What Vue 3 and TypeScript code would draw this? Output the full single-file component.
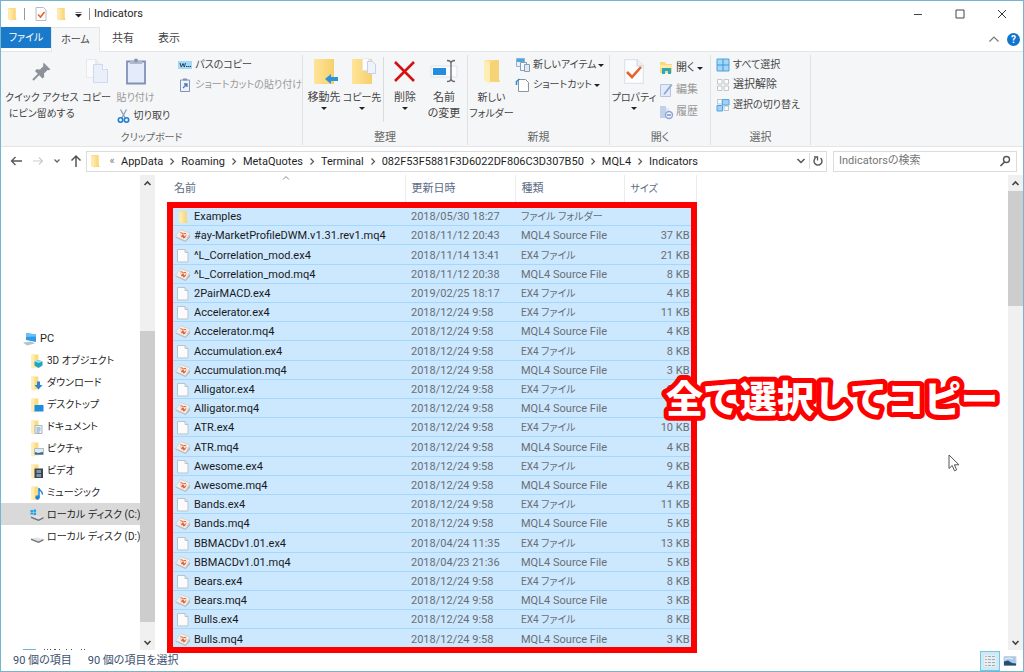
<script setup lang="ts">
import { ref } from 'vue'

interface FileRow {
  name: string
  date: string
  kind: 'folder' | 'mq4' | 'ex4'
  size: string
}

const row = (name: string, date: string, size: string): FileRow => ({
  name,
  date,
  size,
  kind: name.endsWith('.mq4') ? 'mq4' : name.endsWith('.ex4') ? 'ex4' : 'folder',
})

const kindLabel: Record<FileRow['kind'], string> = {
  folder: 'ファイル フォルダー',
  mq4: 'MQL4 Source File',
  ex4: 'EX4 ファイル',
}

const files: FileRow[] = [
  row('Examples', '2018/05/30 18:27', ''),
  row('#ay-MarketProfileDWM.v1.31.rev1.mq4', '2018/11/12 20:43', '37 KB'),
  row('^L_Correlation_mod.ex4', '2018/11/14 13:41', '21 KB'),
  row('^L_Correlation_mod.mq4', '2018/11/12 20:38', '8 KB'),
  row('2PairMACD.ex4', '2019/02/25 18:17', '4 KB'),
  row('Accelerator.ex4', '2018/12/24 9:58', '11 KB'),
  row('Accelerator.mq4', '2018/12/24 9:58', '4 KB'),
  row('Accumulation.ex4', '2018/12/24 9:58', '8 KB'),
  row('Accumulation.mq4', '2018/12/24 9:58', '3 KB'),
  row('Alligator.ex4', '2018/12/24 9:58', '9 KB'),
  row('Alligator.mq4', '2018/12/24 9:58', '4 KB'),
  row('ATR.ex4', '2018/12/24 9:58', '10 KB'),
  row('ATR.mq4', '2018/12/24 9:58', '4 KB'),
  row('Awesome.ex4', '2018/12/24 9:58', '9 KB'),
  row('Awesome.mq4', '2018/12/24 9:58', '4 KB'),
  row('Bands.ex4', '2018/12/24 9:58', '11 KB'),
  row('Bands.mq4', '2018/12/24 9:58', '5 KB'),
  row('BBMACDv1.01.ex4', '2018/04/24 11:35', '13 KB'),
  row('BBMACDv1.01.mq4', '2018/04/23 21:36', '5 KB'),
  row('Bears.ex4', '2018/12/24 9:58', '8 KB'),
  row('Bears.mq4', '2018/12/24 9:58', '3 KB'),
  row('Bulls.ex4', '2018/12/24 9:58', '8 KB'),
  row('Bulls.mq4', '2018/12/24 9:58', '3 KB'),
]

const places = [
  { label: '3D オブジェクト', icon: 'objects' },
  { label: 'ダウンロード', icon: 'download' },
  { label: 'デスクトップ', icon: 'desktop' },
  { label: 'ドキュメント', icon: 'document' },
  { label: 'ピクチャ', icon: 'picture' },
  { label: 'ビデオ', icon: 'video' },
  { label: 'ミュージック', icon: 'music' },
  { label: 'ローカル ディスク (C:)', icon: 'drive-c' },
  { label: 'ローカル ディスク (D:)', icon: 'drive-d' },
]
const current = ref('drive-c')

const crumbs = ['AppData', 'Roaming', 'MetaQuotes', 'Terminal', '082F53F5881F3D6022DF806C3D307B50', 'MQL4', 'Indicators']
const query = ref('')
</script>

<template>
  <div class="window">
    <svg class="defs" aria-hidden="true">
      <defs>
        <linearGradient id="gold" x1="0" y1="0" x2="1" y2="0">
          <stop offset="0" stop-color="#ffe49a" />
          <stop offset="1" stop-color="#f6d06c" />
        </linearGradient>
        <symbol id="folder" viewBox="0 0 16 16">
          <path d="M4 2h7.500v10l1 2H8.500L8 14.500 4 13z" fill="#fbdc83" />
          <path d="M4 2l3.500 1.500V15L4 13z" fill="#ffe9ad" />
          <path d="M7.500 3.500L11.500 2v9l1 3H7.500z" fill="url(#gold)" />
        </symbol>
        <symbol id="ex4" viewBox="0 0 16 16">
          <path d="M2.500 1.500h7.500l3 3v9.500H2.500z" fill="#fbfbfb" stroke="#b9c3cc" />
          <path d="M10 1.500v3h3" fill="none" stroke="#b9c3cc" />
        </symbol>
        <symbol id="mq4" viewBox="0 0 16 16">
          <path d="M5.500 1.500L15 5l-4.500 8L.5 8.500z" fill="#f3eeeb" stroke="#c9c9cc" stroke-width=".7" />
          <path d="M.5 8.500l10 4.500L15 6.500v3l-4.500 4.500L1.500 10z" fill="#b4b8be" />
          <path d="M5 4.500l1.500 3.500L8 6l1.500 2.500L12 6l-2 4-1.500.5L7.500 9l-1 .5z" fill="#e4622e" />
          <path d="M5.500 4.500l3 1.200 2.500-.2" fill="none" stroke="#dd6436" />
        </symbol>
        <symbol id="corner-folder" viewBox="0 0 16 16">
          <path d="M2.500 1.500h7v13h-7z" fill="#fbdc83" />
          <path d="M2.500 1.500l3 1V16l-3-1.500z" fill="#ffedb5" />
        </symbol>
        <symbol id="page" viewBox="0 0 16 20">
          <path d="M.5.5h10l5 5v14H.5z" fill="#fcfdff" stroke="#dfe3ea" />
          <path d="M10.500.5v5h5" fill="#eef1f7" stroke="#d2d8e3" />
        </symbol>
      </defs>
    </svg>

    <header class="title-bar">
      <svg class="i16"><use href="#folder" /></svg>
      <span class="bar" />
      <button class="plain" aria-label="プロパティ">
        <svg class="i16" viewBox="0 0 16 16"><path d="M3 1.500h7.500L13 4v10.500H3z" fill="#fff" stroke="#b8bcc2" /><path d="M5 8.500l2.500 2.500 4-5" fill="none" stroke="#e5622b" stroke-width="1.600" /></svg>
      </button>
      <button class="plain" aria-label="新しいフォルダー"><svg class="i16"><use href="#folder" /></svg></button>
      <button class="plain customize" aria-label="クイック アクセス ツール バーのカスタマイズ">
        <svg viewBox="0 0 12 16"><path d="M2.500 6.500h6" stroke="#777" /><path d="M2 8h7l-3.500 3.500z" fill="#222" /></svg>
      </button>
      <span class="bar dark" />
      <h1>Indicators</h1>
      <div class="controls">
        <button aria-label="最小化"><svg viewBox="0 0 10 10"><path d="M1 5.500h8" stroke="#444" /></svg></button>
        <button aria-label="最大化"><svg viewBox="0 0 10 10"><path d="M1 1h8v8H1z" fill="none" stroke="#444" /></svg></button>
        <button aria-label="閉じる"><svg viewBox="0 0 10 10"><path d="M1 1l8 8M9 1L1 9" stroke="#333" /></svg></button>
      </div>
    </header>

    <nav class="tabs">
      <button class="file">ファイル</button>
      <button class="active">ホーム</button>
      <button>共有</button>
      <button>表示</button>
      <div class="help">
        <button class="plain" aria-label="リボンの最小化"><svg class="i16" viewBox="0 0 16 16"><path d="M3.500 10.500L8 6l4.500 4.500" fill="none" stroke="#777" stroke-width="1.200" /></svg></button>
        <button class="question" aria-label="ヘルプ">?</button>
      </div>
    </nav>

    <section class="ribbon">
      <div class="group clipboard">
        <div class="tools">
          <button class="big pin">
            <svg viewBox="0 0 28 28"><path d="M5 23l7-7" stroke="#8f959b" stroke-width="2" /><path d="M15.500 5.500l7 7-2 .8-1-.3-3.500 3.500.2 3.500-1.700 1.500-7.500-7.500 1.500-1.700 3.500.2 3.500-3.500-.4-1z" fill="#8b9299" /></svg>
            <span class="kana">クイック アクセス<br>にピン留めする</span>
          </button>
          <button class="big copy">
            <svg viewBox="0 0 28 28"><g opacity=".75"><use href="#page" x="3" y="2" width="15" height="19" /></g><path d="M10.500 7.500h9l5 5v13h-14z" fill="#e9f0fc" stroke="#cfd9ee" /><path d="M19.500 7.500v5h5" fill="#fff" stroke="#cfd9ee" /></svg>
            <span class="kana">コピー</span>
          </button>
          <div class="paste-stack">
            <button class="big faded">
              <svg viewBox="0 0 28 28"><path d="M5 4.500h18v22H5z" fill="#e4ebfb" stroke="#8291b8" stroke-width="1.800" /><path d="M8 4h12v3H8z" fill="#aeb9ce" /><circle cx="14" cy="3.500" r="2" fill="#8b98b3" /></svg>
              <span class="kana">貼り付け</span>
            </button>
            <button class="small"><svg viewBox="0 0 16 16"><path d="M4.500 1.500l5 9M10.500 1.500l-5 9" stroke="#8aa0b6" stroke-width="1.300" /><circle cx="4.500" cy="12" r="2.200" fill="none" stroke="#1c7fd0" stroke-width="1.600" /><circle cx="10.500" cy="12" r="2.200" fill="none" stroke="#1c7fd0" stroke-width="1.600" /></svg><span class="kana">切り取り</span></button>
          </div>
          <div class="column">
            <button class="small"><svg viewBox="0 0 16 16"><path d="M1 4h14v8H1z" fill="#a6d8f5" /><path d="M3 6l1.300 4L6 6.500 7.300 10 8.500 6M9 9.500h1.500M11 9.500h1.500M13 9.500h1" fill="none" stroke="#1d4964" /></svg><span class="kana">パスのコピー</span></button>
            <button class="small faded"><svg viewBox="0 0 16 16"><path d="M3.500 3h9v11.500h-9z" fill="#edf3fc" stroke="#8292b4" /><path d="M6 1.500h4v2H6z" fill="#8292b4" /><path d="M6 11l4-4M7 7h3v3" fill="none" stroke="#4c79b8" stroke-width="1.300" /></svg><span class="kana">ショートカットの貼り付け</span></button>
          </div>
        </div>
        <h2 class="kana">クリップボード</h2>
      </div>

      <div class="group organize">
        <div class="tools">
          <button class="big caret">
            <svg viewBox="0 0 28 28"><path d="M4 2h20v25H4z" fill="url(#gold)" /><path d="M15 22l6-5v3h7v4h-7v3z" fill="#2c94dc" /></svg>
            <span>移動先</span>
          </button>
          <button class="big caret">
            <svg viewBox="0 0 28 28"><path d="M4 2h20v25H4z" fill="url(#gold)" /><use href="#page" x="14" y="1" width="10" height="13" /><path d="M19.500 4.500h5l3 3v9h-8z" fill="#edf3fd" stroke="#c5d1e8" /></svg>
            <span class="kana">コピー先</span>
          </button>
          <span class="rule" />
          <button class="big caret">
            <svg viewBox="0 0 28 28"><path d="M4 5l19 19M23 5L4 24" stroke="#d41111" stroke-width="2.600" /></svg>
            <span>削除</span>
          </button>
          <button class="big rename">
            <svg viewBox="0 0 28 28"><path d="M1 9h26v11H1z" fill="#fafcff" stroke="#e0e3e8" /><path d="M3 11h13v7H3z" fill="#258cdf" /><path d="M17 3.500c3 0 4 1 4 3v15c0 2-1 3-4 3M25 3.500c-3 0-4 1-4 3v15c0 2 1 3 4 3" fill="none" stroke="#666" stroke-width="1.300" /></svg>
            <span>名前<br>の変更</span>
          </button>
        </div>
        <h2>整理</h2>
      </div>

      <div class="group create">
        <div class="tools">
          <button class="big">
            <svg viewBox="0 0 28 28"><path d="M6 3h15v19l1 3H12l-6-2z" fill="url(#gold)" /><path d="M6 3l6 2v22l-6-4z" fill="#ffedb3" /><path d="M12 5l9-2v20l-9 2z" fill="#f5d376" /></svg>
            <span class="kana">新しい<br>フォルダー</span>
          </button>
          <div class="column">
            <button class="small menu"><svg viewBox="0 0 16 16"><path d="M1.500 1.500h8v8h-8z" fill="#e3f1fb" stroke="#8db4d2" /><path d="M2 2h7v3H2z" fill="#52a5da" /><path d="M5.500 5.500h6v8h-6z" fill="#f4f8fd" stroke="#8b9db5" /><path d="M9.500 7.500h5v7h-5z" fill="#dfe9f8" stroke="#8b9db5" /></svg><span class="kana">新しいアイテム</span></button>
            <button class="small menu"><svg viewBox="0 0 16 16"><path d="M3.500 2.500h7l3 3v9h-10z" fill="#fff" stroke="#8c949e" /><path d="M1.500 8V4.500l3-2.500" fill="none" stroke="#2c8fd6" stroke-width="1.600" /></svg><span class="kana">ショートカット</span></button>
          </div>
        </div>
        <h2>新規</h2>
      </div>

      <div class="group open">
        <div class="tools">
          <button class="big caret">
            <svg viewBox="0 0 28 28"><use href="#page" x="4" y="2" width="20" height="25" /><path d="M7 15l5 5 9-10" fill="none" stroke="#e6622a" stroke-width="2.600" /></svg>
            <span class="kana">プロパティ</span>
          </button>
          <div class="column loose">
            <button class="small menu"><svg viewBox="0 0 16 16"><path d="M2 2h5l1 2h6v9H2z" fill="#fad978" /><path d="M2 5h12v3H2z" fill="#ffe9a6" /><path d="M4 14V8h9v6h-3v-3H7v3z" fill="#2aa8bd" /></svg>開く</button>
            <button class="small faded"><svg viewBox="0 0 16 16"><path d="M2.500 2.500h10v12h-10z" fill="#e3ebfa" stroke="#b7c4df" /><path d="M6 11l7-9 1.500 1-7 9-2 1z" fill="#8ea7d0" /></svg>編集</button>
            <button class="small faded"><svg viewBox="0 0 16 16"><path d="M2 2h6v12H2z" fill="#c3d0ec" /><path d="M8 4h3v8H8z" fill="#e1e8f6" /><circle cx="11" cy="11" r="3.500" fill="#eef3fc" stroke="#8ea5d4" stroke-width="1.400" /><path d="M9 11h4" stroke="#6f8cc6" stroke-width="1.400" /></svg>履歴</button>
          </div>
        </div>
        <h2>開く</h2>
      </div>

      <div class="group select">
        <div class="tools">
          <div class="column">
            <button class="small"><svg viewBox="0 0 16 16"><path d="M2 2h12v12H2z" fill="#a5d5f8" stroke="#4da3e0" /><path d="M8 2v12M2 8h12" stroke="#3d97da" /></svg><span class="kana">すべて選択</span></button>
            <button class="small"><svg viewBox="0 0 16 16"><path d="M2.500 2.500h4.500v4.500H2.500zM9 2.500h4.500v4.500H9zM2.500 9h4.500v4.500H2.500zM9 9h4.500v4.500H9z" fill="#fbfbfb" stroke="#c2c5c9" /></svg>選択解除</button>
            <button class="small"><svg viewBox="0 0 16 16"><path d="M2.500 2.500h4.500v4.500H2.500zM9 9h4.500v4.500H9z" fill="#fbfbfb" stroke="#b9c3cd" /><path d="M7.500 2.500h6.500v5.500H7.500zM2 8.500h5.500v5.500H2z" fill="#9ed1f7" stroke="#55a6e0" /></svg><span class="kana">選択の切り替え</span></button>
          </div>
        </div>
        <h2>選択</h2>
      </div>
    </section>

    <div class="address-row">
      <div class="history">
        <button class="plain" aria-label="戻る"><svg viewBox="0 0 16 16"><path d="M14 8H4M7.500 4L3.500 8l4 4" fill="none" stroke="#555" stroke-width="1.300" /></svg></button>
        <button class="plain" aria-label="進む"><svg viewBox="0 0 16 16"><path d="M3 8h9M9 4.500L12.500 8 9 11.500" fill="none" stroke="#ccc" stroke-width="1.200" /></svg></button>
        <button class="plain tiny" aria-label="最近表示した場所"><svg viewBox="0 0 10 16"><path d="M2.500 6.500L5 9l2.500-2.500" fill="none" stroke="#666" stroke-width="1.300" /></svg></button>
        <button class="plain" aria-label="上へ"><svg viewBox="0 0 16 16"><path d="M8 14V3M3.500 7.500L8 3l4.500 4.500" fill="none" stroke="#555" stroke-width="1.500" /></svg></button>
      </div>
      <div class="address">
        <svg class="i16"><use href="#folder" /></svg>
        <span class="more">«</span>
        <template v-for="(c, i) in crumbs" :key="c">
          <svg v-if="i > 0" class="chev" viewBox="0 0 18 16"><path d="M7.500 5.500l3 3-3 3" fill="none" stroke="#555" stroke-width="1.200" /></svg>
          <a href="#">{{ c }}</a>
        </template>
        <button class="plain end" aria-label="以前の場所"><svg viewBox="0 0 16 16"><path d="M4.500 6L8 9.500 11.500 6" fill="none" stroke="#555" stroke-width="1.500" /></svg></button>
        <button class="plain refresh" aria-label="最新の情報に更新"><svg viewBox="0 0 16 16"><path d="M5.500 5A4 4 0 1 0 10.500 5" fill="none" stroke="#555" stroke-width="1.400" /><path d="M4 4h3.500v3.500" fill="none" stroke="#555" stroke-width="1.300" /></svg></button>
      </div>
      <label class="search">
        <input v-model="query" type="text" placeholder="Indicatorsの検索" aria-label="Indicatorsの検索">
        <svg class="i16" viewBox="0 0 16 16"><circle cx="9.500" cy="6.500" r="3" fill="none" stroke="#555" stroke-width="1.400" /><path d="M7.500 9L3.500 13" stroke="#555" stroke-width="1.700" /></svg>
      </label>
    </div>

    <main class="body">
      <aside class="tree">
        <a href="#" class="root"><svg class="i16" viewBox="0 0 16 16"><path d="M4 2l10 1.500v7.500L4 9z" fill="#2f9be4" /><path d="M4 2l10 1.500v2L4 6z" fill="#6cc1f4" /><path d="M1 11.500l8-1 4 2-8 2z" fill="#b7c2cb" /></svg>PC</a>
        <a v-for="p in places" :key="p.icon" href="#" :class="{ current: current === p.icon }" @click.prevent="current = p.icon">
          <svg class="i16" viewBox="0 0 16 16">
            <use v-if="!p.icon.startsWith('drive')" href="#corner-folder" />
            <template v-if="p.icon === 'objects'"><path d="M5.500 8.500L9.500 7l4 1.500v4l-4 2.500-4-2.500z" fill="#20a4c4" /><path d="M5.500 8.500L9.500 7l4 1.500-4 1.500z" fill="#8fe0ef" /></template>
            <path v-else-if="p.icon === 'download'" d="M8 6.500h3V10h2.500l-4 4.500-4-4.500H8z" fill="#2a82d0" />
            <path v-else-if="p.icon === 'desktop'" d="M5.500 8h9v6.500h-9z" fill="#1c8fe2" />
            <template v-else-if="p.icon === 'document'"><path d="M6 6.500h7v8H6z" fill="#f0f5fa" stroke="#a5b5c4" /><path d="M7.500 9h4M7.500 11h4M7.500 13h3" stroke="#6f93b5" /></template>
            <template v-else-if="p.icon === 'picture'"><path d="M5.500 7.500h9v6h-9z" fill="#dcecf8" stroke="#b0bbc6" /><path d="M6 11l3 1 5-1v2.500H6z" fill="#37698f" /></template>
            <template v-else-if="p.icon === 'video'"><path d="M5.500 5.500h8.500v9.500H5.500z" fill="#3e454d" /><path d="M7.500 7h4.500v3H7.500zM7.500 11h4.500v3H7.500z" fill="#7c96ad" /></template>
            <template v-else-if="p.icon === 'music'"><path d="M10 3v9.500M10 3.500c0 2 4 2.500 3.500 6" fill="none" stroke="#1b86d6" stroke-width="1.500" /><circle cx="8.500" cy="12.500" r="2.200" fill="#1b86d6" /></template>
            <template v-else>
              <path d="M2 9.500l6-1 6.500 1.500-5 2.500z" fill="#dfe2e5" /><path d="M2 9.500l7.500 3 5-2.500v1.500l-5 2.500L2 11z" fill="#6d7379" />
              <path v-if="p.icon === 'drive-c'" d="M1.500 3h2.500v2H1.500zM4.500 2.500h2.500V5H4.500zM1.500 5.500h2.500v2H1.500zM4.500 5.500h2.500V8H4.500z" fill="#1fa3e6" />
            </template>
          </svg><span class="kana">{{ p.label }}</span>
        </a>
        <svg class="cut" viewBox="0 0 64 2" aria-hidden="true"><path d="M0 1.500h13" stroke="#6fb4dc" /><path d="M21 1.500h1M24 1.500h1M27 1.500h1M31 1.500h2M36 1.500h1M43 1.500h1M48 1.500h1M58 1.500h1M61 1.500h1" stroke="#555" /></svg>
      </aside>
      <div class="scroll left" aria-hidden="true">
        <svg viewBox="0 0 14 16"><path d="M4 10l3-3 3 3" fill="none" stroke="#444" stroke-width="1.600" /></svg>
        <i class="gap" /><i class="thumb" /><i class="rest" />
        <svg viewBox="0 0 14 16"><path d="M4 7l3 3 3-3" fill="none" stroke="#444" stroke-width="1.600" /></svg>
      </div>

      <div class="files">
        <table>
          <thead>
            <tr>
              <th class="c-name">名前<svg class="sort" viewBox="0 0 10 6"><path d="M2 4.500l3-3 3 3" fill="none" stroke="#888" /></svg></th>
              <th class="c-date">更新日時</th>
              <th class="c-kind">種類</th>
              <th class="c-size kana">サイズ</th>
            </tr>
          </thead>
          <tbody>
            <tr v-for="f in files" :key="f.name">
              <td class="name"><div><svg class="i16"><use :href="'#' + f.kind" /></svg>{{ f.name }}</div></td>
              <td>{{ f.date }}</td>
              <td :class="{ kana: f.kind !== 'mq4' }">{{ kindLabel[f.kind] }}</td>
              <td class="size">{{ f.size }}</td>
            </tr>
          </tbody>
        </table>
        <div class="frame" />
        <svg class="callout" viewBox="0 0 350 60"><text x="8" y="43">全て選択してコピー</text></svg>
        <svg class="pointer" viewBox="0 0 12 18"><path d="M1 1v13.500l3.200-3 2.300 5.300 2.200-1-2.300-5H11z" fill="#fff" stroke="#555" /></svg>
      </div>
      <div class="scroll right" aria-hidden="true">
        <svg viewBox="0 0 14 16"><path d="M4 10l3-3 3 3" fill="none" stroke="#444" stroke-width="1.600" /></svg>
        <i class="thumb" /><i class="rest" />
        <svg viewBox="0 0 14 16"><path d="M4 7l3 3 3-3" fill="none" stroke="#444" stroke-width="1.600" /></svg>
      </div>
    </main>

    <footer class="status">
      <span>90 個の項目</span>
      <span>90 個の項目を選択</span>
      <div class="views">
        <button class="on" aria-label="詳細"><svg viewBox="0 0 16 16"><path d="M2 2h12v12H2z" fill="#e6eef1" /><path d="M3 3.500h2M3 6.500h2M3 9.500h2M3 12.500h2" stroke="#d3aaa4" /><path d="M6 3.500h3M10 3.500h3M6 6.500h3M10 6.500h3M6 9.500h3M10 9.500h3M6 12.500h3M10 12.500h3" stroke="#9dabb4" /></svg></button>
        <button aria-label="大アイコン"><svg viewBox="0 0 16 16"><path d="M2 3.500h12v9H2z" fill="#a8c9ef" stroke="#c9d3dd" /><path d="M2 8.500l4-1 4 2.500 4 .5v2H2z" fill="#22506f" /><path d="M3 6l4-1 4 1" stroke="#eef6ff" fill="none" /></svg></button>
      </div>
    </footer>
  </div>
</template>

<style>
body {
  margin: 0;
}
</style>

<style scoped>
* {
  box-sizing: border-box;
}
.window {
  display: flex;
  flex-direction: column;
  height: 100vh;
  border: 1px solid #74b6cc;
  background: #fff;
  color: #1f1f1f;
  font: 11px/16px Roboto, "Noto Sans CJK JP", sans-serif;
  font-feature-settings: "palt";
  overflow: hidden;
}
.defs {
  position: absolute;
  width: 0;
  height: 0;
}
button {
  margin: 0;
  padding: 0;
  border: 0;
  background: none;
  color: inherit;
  font: inherit;
  font-feature-settings: inherit;
  white-space: nowrap;
}
svg {
  display: block;
  flex: none;
}
.i16 {
  width: 16px;
  height: 16px;
}
a {
  color: inherit;
  text-decoration: none;
  white-space: nowrap;
}
h1, h2 {
  margin: 0;
  font-size: 11px;
  font-weight: 400;
}

.title-bar {
  display: flex;
  align-items: center;
  flex: none;
  height: 26px;
  gap: 4px;
  padding-left: 3px;
}
.bar {
  width: 1px;
  height: 12px;
  margin-right: 4px;
  background: #999;
}
.bar.dark {
  margin: 0;
}
.title-bar h1 {
  font-size: 11px;
}
.customize svg {
  width: 12px;
  height: 16px;
}
.controls {
  display: flex;
  align-self: stretch;
  margin-left: auto;
}
.controls button {
  display: grid;
  place-items: center;
  width: 42px;
}
.controls svg {
  width: 10px;
  height: 10px;
}

.tabs {
  display: flex;
  flex: none;
  height: 24px;
}
.tabs > button {
  width: 46px;
  color: #444;
}
.tabs > .file {
  width: 50px;
  margin-bottom: 3px;
  background: #1979ca;
  color: #fff;
  font-size: 10px;
}
.tabs > .active {
  position: relative;
  width: 49px;
  margin-bottom: -1px;
  border: 1px solid #e3e5e7;
  border-bottom: 0;
  background: #f5f6f7;
  font-size: 10px;
}
.help {
  display: flex;
  align-items: center;
  gap: 5px;
  margin-left: auto;
  padding-right: 3px;
}
.question {
  width: 13px;
  height: 13px;
  border-radius: 50%;
  background: #0f75cf;
  color: #fff;
  font-size: 10px;
  font-weight: 700;
  line-height: 13px;
}

.ribbon {
  display: flex;
  flex: none;
  height: 96px;
  border: 1px solid #e3e5e7;
  border-width: 1px 0;
  background: #f5f6f7;
  color: #444;
}
.group {
  display: flex;
  flex-direction: column;
  justify-content: space-between;
  margin: 3px 0 1px;
  border-right: 1px solid #dfe1e3;
}
.group h2 {
  color: #666;
  text-align: center;
  line-height: 14px;
}
.kana,
.group h2.kana {
  font-size: 10px;
}
.tools {
  display: flex;
}
.clipboard { width: 302px; }
.organize { width: 165px; }
.create { width: 142px; }
.open { width: 101px; }
.select { width: 100px; }
.big {
  display: flex;
  flex-direction: column;
  align-items: center;
  gap: 5px;
  width: 38px;
  padding-top: 2px;
  line-height: 16px;
}
.big svg {
  width: 28px;
  height: 28px;
}
.caret::after,
.menu::after {
  content: "";
  border: 3px solid transparent;
  border-top-color: #222;
  border-bottom: 0;
}
.caret::after {
  margin-top: -4px;
}
.pin {
  width: 82px;
}
.clipboard .copy {
  width: 28px;
}
.clipboard .faded {
  color: #999;
}
.paste-stack {
  width: 67px;
}
.paste-stack .big {
  width: 50px;
}
.paste-stack .small {
  margin-left: 5px;
}
.column {
  display: flex;
  flex-direction: column;
}
.small {
  display: flex;
  align-items: center;
  gap: 2px;
  height: 20px;
  line-height: 18px;
}
.small svg {
  width: 16px;
  height: 16px;
}
.faded {
  color: #999;
}
.loose {
  padding-top: 2px;
}
.loose .small {
  height: 22px;
}
.organize .tools {
  padding-left: 2px;
}
.rule {
  width: 1px;
  margin: 2px 2px 0;
  background: #d9dbdd;
}
.organize .rename {
  width: 40px;
}
.create .big {
  width: 47px;
}
.open .big {
  width: 48px;
}
.select .tools {
  padding-left: 4px;
}

.address-row {
  display: flex;
  flex: none;
  align-items: center;
  height: 28px;
  padding-right: 6px;
}
.history {
  display: flex;
  gap: 6px;
  width: 85px;
  padding-left: 7px;
}
.history svg,
.address button svg {
  width: 16px;
  height: 16px;
}
.history .tiny svg {
  width: 10px;
}
.address {
  display: flex;
  flex: 1;
  align-items: center;
  height: 21px;
  border: 1px solid #dcdcdc;
}
.address a {
  padding-top: 1px;
}
.more {
  width: 18px;
  color: #777;
  text-align: center;
}
.chev {
  width: 18px;
  height: 16px;
}
.end {
  margin-left: auto;
}
.refresh {
  border-left: 1px solid #dcdcdc;
}
.search {
  display: flex;
  align-items: center;
  width: 184px;
  height: 21px;
  margin-left: 6px;
  padding: 0 3px 0 5px;
  border: 1px solid #dcdcdc;
}
.search input {
  flex: 1;
  min-width: 0;
  padding: 0;
  border: 0;
  outline: 0;
  font: inherit;
  font-feature-settings: inherit;
}
.search input::placeholder {
  color: #767676;
}

.body {
  display: flex;
  flex: 1;
  min-height: 0;
}
.tree {
  display: flex;
  flex-direction: column;
  width: 139px;
  padding-top: 152px;
  overflow: hidden;
}
.tree a {
  display: flex;
  flex: none;
  align-items: center;
  gap: 2px;
  height: 22px;
  padding: 2px 0 0 28px;
}
.tree .root {
  padding-left: 21px;
}
.tree .current {
  background: #d9d9d9;
}
.cut {
  width: 64px;
  height: 2px;
  margin: auto 0 0 22px;
}
.scroll {
  display: flex;
  flex-direction: column;
  width: 15px;
  background: #f0f0f0;
}
.scroll svg {
  height: 16px;
  width: 100%;
}
.left .gap {
  flex: 140;
}
.thumb {
  flex: 291;
  background: #cdcdcd;
}
.left .rest {
  flex: 12;
}
.right .thumb {
  flex: 115;
}
.right .rest {
  flex: 328;
}
.files {
  position: relative;
  flex: 1;
  padding: 0 0 1px 18px;
}
table {
  width: 524px;
  height: 100%;
  border-collapse: collapse;
  table-layout: fixed;
}
th {
  height: 32px;
  padding: 0 0 5px 6px;
  border-right: 1px solid #ececec;
  color: #5b6b84;
  font-weight: 400;
  text-align: left;
}
.c-name { width: 232px; padding-left: 1px; position: relative; }
.c-date { width: 110px; }
.c-kind { width: 109px; }
.sort {
  position: absolute;
  top: 0;
  left: 108px;
  width: 10px;
  height: 6px;
}
td {
  padding: 2px 0 0 6px;
  border-bottom: 1px solid #a5d6fb;
  background: #cce8ff;
  color: #6a6e73;
  line-height: 16px;
  white-space: nowrap;
}
.name {
  padding-left: 2px;
  color: #1a1a1a;
}
.name div {
  display: flex;
  align-items: center;
  gap: 3px;
}
.size {
  padding-right: 7px;
  text-align: right;
}
.frame {
  position: absolute;
  top: 27px;
  bottom: -3px;
  left: 12px;
  width: 530px;
  border: 6px solid #f00;
}
.callout {
  position: absolute;
  top: 195px;
  right: 0;
  width: 350px;
  height: 60px;
}
.callout text {
  fill: #fff;
  stroke: #f00;
  stroke-width: 10px;
  stroke-linejoin: round;
  paint-order: stroke;
  font: 900 37px "Noto Sans CJK JP", sans-serif;
  font-feature-settings: normal;
}
.pointer {
  position: absolute;
  top: 279px;
  right: 48px;
  width: 12px;
  height: 18px;
}

.status {
  display: flex;
  flex: none;
  align-items: center;
  gap: 16px;
  height: 21px;
  padding: 1px 0 0 12px;
  color: #3b4f6f;
}
.views {
  display: flex;
  align-self: stretch;
  margin-left: auto;
  padding-right: 3px;
}
.views button {
  display: grid;
  place-items: center;
  width: 20px;
}
.views svg {
  width: 16px;
  height: 16px;
}
.views .on {
  border: 1px solid #7cc3e0;
  background: #cdeaf7;
}
</style>
